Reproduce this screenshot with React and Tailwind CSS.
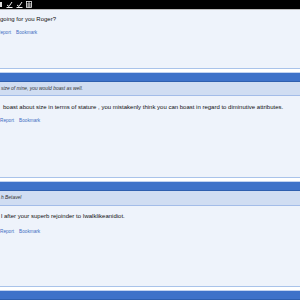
import React from "react";

function Sep() {
  return (
    <div className="flex flex-col">
      <div className="h-px bg-[#a9c3ea]" />
      <div className="h-[3px] bg-white" />
      <div className="h-px bg-[#c2d3f0]" />
      <div className="h-[9px] bg-[#3e72c9] border-b border-[#2f5fae]" />
    </div>
  );
}

function Links({ shift }) {
  return (
    <div className={`h-[6px] flex items-center gap-[5px] text-[4.7px] leading-[6px] text-[#3d6dc2] ${shift}`}>
      <span>Report</span>
      <span>Bookmark</span>
    </div>
  );
}

function Quote({ children }) {
  return (
    <div className="h-[15px] bg-[#d0ddf2] border-b border-[#a3bce8] flex items-center pl-px text-[4.9px] italic text-[#333] whitespace-nowrap">
      {children}
    </div>
  );
}

export default function App() {
  return (
    <div className="w-[300px] h-[300px] overflow-hidden bg-[#eef3fb] flex flex-col" style={{ fontFamily: '"Liberation Sans", Arial, sans-serif' }}>
      <div className="h-[9px] bg-black flex items-center gap-[3px] pl-0">
        <svg width="3" height="7" viewBox="0 0 3 7"><rect x="0" y="1" width="2" height="5" fill="#ddd" /></svg>
        <svg width="7" height="7" viewBox="0 0 7 7" fill="none" stroke="#eee" strokeWidth="1"><path d="M1 4 L3 5.5 L6 1" /><path d="M0.5 6.5 H6.5" /></svg>
        <svg width="7" height="7" viewBox="0 0 7 7" fill="none" stroke="#eee" strokeWidth="1"><path d="M1 4 L3 5.5 L6 1" /><path d="M0.5 6.5 H6.5" /></svg>
        <svg width="6" height="7" viewBox="0 0 6 7" fill="none" stroke="#eee" strokeWidth="0.8"><rect x="0.5" y="0.5" width="5" height="6" /><path d="M0.5 3 H5.5 M0.5 5 H5.5 M3 0.5 V6.5" /></svg>
      </div>
      <div className="h-px bg-[#bdbdbd]" />

      <div className="h-[59px] flex flex-col">
        <div className="mt-[5px] h-[8px] leading-[8px] text-[6px] text-[#111] whitespace-nowrap">going for you Roger?</div>
        <div className="mt-[7px]"><Links shift="-ml-[3px]" /></div>
      </div>

      <Sep />
      <Quote>size of mine, you would boast as well.</Quote>
      <div className="h-[82px] flex flex-col">
        <div className="mt-[7px] h-[8px] leading-[8px] text-[6px] text-[#111] whitespace-nowrap pl-[3px]">boast about size in terms of stature , you mistakenly think you can boast in regard to diminutive attributes.</div>
        <div className="mt-[7px]"><Links shift="" /></div>
      </div>

      <Sep />
      <Quote>h Betavel</Quote>
      <div className="h-[82px] flex flex-col">
        <div className="mt-[6px] h-[8px] leading-[8px] text-[6px] text-[#111] whitespace-nowrap pl-[1px]">l after your superb rejoinder to Iwalklikeanidiot.</div>
        <div className="mt-[9px]"><Links shift="" /></div>
      </div>
      <Sep />
    </div>
  );
}
